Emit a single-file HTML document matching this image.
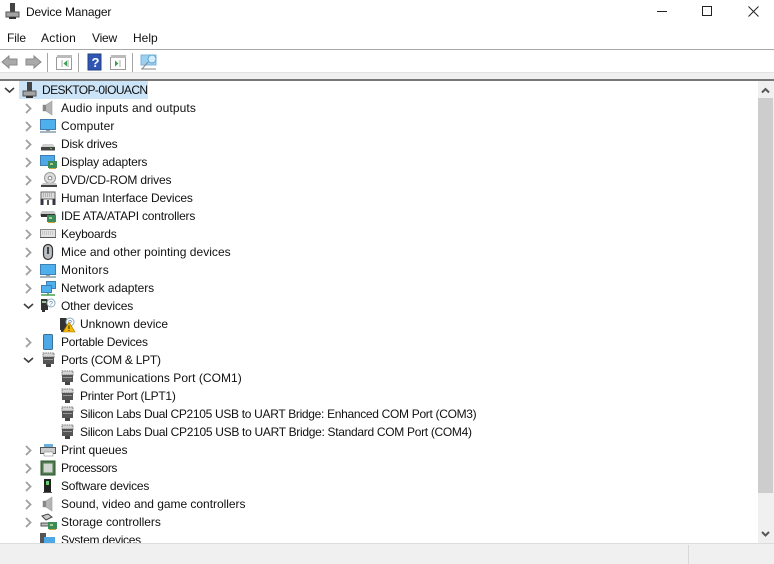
<!DOCTYPE html>
<html><head><meta charset="utf-8"><style>
html,body{margin:0;padding:0;width:774px;height:564px;overflow:hidden;background:#fff}
body{position:relative;font-family:"Liberation Sans",sans-serif;font-size:12px;color:#111}
.t{position:absolute;white-space:nowrap;line-height:16px;height:16px;filter:blur(.2px)}
.b{position:absolute}
svg{position:absolute;left:0;top:0;filter:blur(.25px)}
</style></head><body>
<div class="b" style="left:0;top:49px;width:774px;height:1px;background:#a8a8a8"></div>
<div class="b" style="left:0;top:72px;width:774px;height:1px;background:#e2e2e2"></div>
<div class="b" style="left:0;top:73px;width:774px;height:7px;background:#f0f0f0"></div>
<div class="b" style="left:0;top:79px;width:774px;height:2px;background:#777"></div>
<div class="b" style="left:19px;top:81px;width:129px;height:18px;background:#cce4f7"></div>
<div class="b" style="left:758px;top:81px;width:16px;height:462px;background:#f0f0f0"></div>
<div class="b" style="left:758px;top:98px;width:15px;height:395px;background:#cdcdcd"></div>
<div class="b" style="left:0;top:543px;width:774px;height:21px;background:#f0f0f0;border-top:1px solid #dcdcdc;box-sizing:border-box"></div>
<div class="b" style="left:688px;top:545px;width:1px;height:19px;background:#d8d8d8"></div>

<span class="t" style="left:26px;top:4px;letter-spacing:-.15px">Device Manager</span>
<span class="t" style="left:7px;top:30px;letter-spacing:-.1px">File</span>
<span class="t" style="left:41px;top:30px;letter-spacing:.3px">Action</span>
<span class="t" style="left:92px;top:30px;letter-spacing:-.2px">View</span>
<span class="t" style="left:133px;top:30px">Help</span>

<span class="t" style="left:42px;top:82px;letter-spacing:-.6px">DESKTOP-0IOUACN</span>
<span class="t" style="left:61px;top:100px;letter-spacing:.12px">Audio inputs and outputs</span>
<span class="t" style="left:61px;top:118px;letter-spacing:.1px">Computer</span>
<span class="t" style="left:61px;top:136px;letter-spacing:-.2px">Disk drives</span>
<span class="t" style="left:61px;top:154px;letter-spacing:-.2px">Display adapters</span>
<span class="t" style="left:61px;top:172px;letter-spacing:-.18px">DVD/CD-ROM drives</span>
<span class="t" style="left:61px;top:190px;letter-spacing:-.13px">Human Interface Devices</span>
<span class="t" style="left:61px;top:208px;letter-spacing:-.2px">IDE ATA/ATAPI controllers</span>
<span class="t" style="left:61px;top:226px;letter-spacing:-.2px">Keyboards</span>
<span class="t" style="left:61px;top:244px;letter-spacing:.03px">Mice and other pointing devices</span>
<span class="t" style="left:61px;top:262px;letter-spacing:.25px">Monitors</span>
<span class="t" style="left:61px;top:280px;letter-spacing:-.06px">Network adapters</span>
<span class="t" style="left:61px;top:298px;letter-spacing:-.15px">Other devices</span>
<span class="t" style="left:80px;top:316px">Unknown device</span>
<span class="t" style="left:61px;top:334px;letter-spacing:-.25px">Portable Devices</span>
<span class="t" style="left:61px;top:352px;letter-spacing:-.25px">Ports (COM &amp; LPT)</span>
<span class="t" style="left:80px;top:370px;letter-spacing:.04px">Communications Port (COM1)</span>
<span class="t" style="left:80px;top:388px;letter-spacing:-.27px">Printer Port (LPT1)</span>
<span class="t" style="left:80px;top:406px;letter-spacing:-.31px">Silicon Labs Dual CP2105 USB to UART Bridge: Enhanced COM Port (COM3)</span>
<span class="t" style="left:80px;top:424px;letter-spacing:-.3px">Silicon Labs Dual CP2105 USB to UART Bridge: Standard COM Port (COM4)</span>
<span class="t" style="left:61px;top:442px;letter-spacing:-.08px">Print queues</span>
<span class="t" style="left:61px;top:460px;letter-spacing:-.4px">Processors</span>
<span class="t" style="left:61px;top:478px;letter-spacing:-.2px">Software devices</span>
<span class="t" style="left:61px;top:496px;letter-spacing:-.03px">Sound, video and game controllers</span>
<span class="t" style="left:61px;top:514px;letter-spacing:-.05px">Storage controllers</span>
<div class="b" style="left:0;top:532px;width:758px;height:11px;overflow:hidden"><span class="t" style="left:61px;top:0;letter-spacing:-.3px">System devices</span></div>

<svg width="774" height="564" viewBox="0 0 774 564" fill="none">
<defs>
<path id="cr" d="M0 0l4.500 4.500-4.500 4.500" stroke="#a2a2a2" stroke-width="1.900"/>
<path id="cd" d="M0 0l4.500 4 4.500-4" stroke="#404040" stroke-width="1.600"/>
<g id="port">
<rect x="1" y="1" width="11" height="4" fill="#d5d5d5" stroke="#777" stroke-dasharray="1.500 .8"/>
<rect x="1" y="5" width="11" height="7" fill="#555"/>
<rect x="2" y="7" width="9" height="1" fill="#999"/>
<rect x="4" y="12" width="5" height="3" fill="#444"/>
</g>
<g id="pc">
<rect x="5" y="0" width="5" height="9" fill="#444"/>
<rect x="1" y="9" width="13" height="5" fill="#a4a4a4" stroke="#555"/>
<rect x="4" y="14" width="7" height="2" fill="#333"/>
</g>
<g id="mon">
<rect x=".5" y=".5" width="15" height="10" fill="#4fb0ee" stroke="#3d7fb5"/>
<rect x="6" y="11" width="4" height="1" fill="#999"/>
<rect x="0" y="12" width="16" height="2" fill="#a4b4c0"/>
</g>
<g id="spk">
<path d="M0 5h3L9 1v14L3 11H0z" fill="#b4b4b4" stroke="#9a9a9a" stroke-width=".6"/>
<rect x="0" y="5" width="3" height="6" fill="#868686"/>
</g>
<g id="board"><rect width="9" height="7" fill="#3a8a5a"/><rect x="1" y="7" width="7" height="1" fill="#c9a43a"/><rect x="2" y="2" width="3" height="2" fill="#a6d08a"/></g>
</defs>

<!-- title icon -->
<use href="#pc" x="5" y="3"/>
<!-- window controls -->
<path d="M657 11.500h10" stroke="#222" stroke-width="1"/>
<rect x="702.500" y="6.500" width="9" height="9" stroke="#222" stroke-width="1"/>
<path d="M748.500 6.500l10 10M758.500 6.500l-10 10" stroke="#222" stroke-width="1"/>

<!-- toolbar -->
<path d="M2 62l7-6v3h8v6H9v3z" fill="#a9a9a9" stroke="#8a8a8a"/>
<path d="M41 62l-7-6v3h-8v6h8v3z" fill="#a9a9a9" stroke="#8a8a8a"/>
<path d="M47.500 53v19M78.500 53v19M132.500 53v19" stroke="#a5a5a5"/>
<rect x="56.500" y="57.500" width="15" height="12" fill="#fff" stroke="#999"/>
<rect x="57" y="55" width="15" height="3" fill="#bbb"/>
<path d="M62 60v7M68 60v7" stroke="#aaa"/><path d="M67 60.500l-3.500 3 3.500 3z" fill="#3aa050"/>
<rect x="88" y="54" width="13" height="16" fill="#2f55b5" stroke="#24407f"/>
<text x="91.500" y="67" font-family="Liberation Sans" font-size="13" font-weight="bold" fill="#fff">?</text>
<rect x="110.500" y="57.500" width="15" height="12" fill="#fff" stroke="#999"/>
<rect x="111" y="55" width="15" height="3" fill="#bbb"/>
<path d="M120 60v7" stroke="#aaa"/><path d="M115 60.500l3.500 3-3.500 3z" fill="#3aa050"/>
<rect x="141" y="55" width="15" height="10" fill="#9bd0f0" stroke="#7db5d8"/>
<circle cx="152" cy="59" r="4" fill="#d3ecfa" stroke="#5aa6d0"/>
<path d="M148 62l-6 7M141 69h15" stroke="#888"/>

<!-- root -->
<use href="#cd" x="5" y="88"/>
<use href="#pc" x="22" y="82"/>

<!-- chevrons right -->
<use href="#cr" x="26" y="104"/><use href="#cr" x="26" y="122"/><use href="#cr" x="26" y="140"/>
<use href="#cr" x="26" y="158"/><use href="#cr" x="26" y="176"/><use href="#cr" x="26" y="194"/>
<use href="#cr" x="26" y="212"/><use href="#cr" x="26" y="230"/><use href="#cr" x="26" y="248"/>
<use href="#cr" x="26" y="266"/><use href="#cr" x="26" y="284"/><use href="#cr" x="26" y="338"/>
<use href="#cr" x="26" y="446"/><use href="#cr" x="26" y="464"/><use href="#cr" x="26" y="482"/>
<use href="#cr" x="26" y="500"/><use href="#cr" x="26" y="518"/>
<use href="#cd" x="24" y="304"/><use href="#cd" x="24" y="358"/>

<!-- icons -->
<use href="#spk" x="43" y="100"/>
<use href="#mon" x="40" y="119"/>
<!-- disk -->
<path d="M43 144h10l2 3v3H41v-3z" fill="#d0d0d0"/><rect x="41" y="147" width="14" height="3.500" fill="#444"/><rect x="50" y="148" width="2" height="1" fill="#5c5"/>
<!-- display -->
<rect x="40.500" y="155.500" width="14" height="10" fill="#4fa8e6" stroke="#3d7fb5"/>
<use href="#board" x="48" y="161"/>
<!-- dvd -->
<circle cx="50" cy="178" r="5.500" fill="#ddd" stroke="#999"/><circle cx="50" cy="178" r="1.800" fill="#fff" stroke="#888"/>
<path d="M43 183h13l1 2v2H41v-2z" fill="#c6c6c6"/><rect x="41" y="185" width="16" height="2" fill="#444"/>
<!-- HID -->
<rect x="41" y="192" width="14" height="7" fill="#ddd" stroke="#666"/><path d="M43 194h10M43 196h10" stroke="#888" stroke-dasharray="1 1"/>
<path d="M42 199v6M54 199v6" stroke="#334" stroke-width="3"/><path d="M48 200v5" stroke="#555" stroke-width="2"/>
<!-- IDE -->
<path d="M42 211h12l2 3v2H40v-2z" fill="#c6c6c6"/><rect x="41" y="214" width="14" height="3" fill="#333"/>
<use href="#board" x="47" y="215"/>
<!-- keyboard -->
<rect x="40.500" y="229.500" width="15" height="8" fill="#e2e2e2" stroke="#888"/><path d="M42 232h12M42 234h12" stroke="#aaa" stroke-dasharray="1 1"/><rect x="40" y="237" width="16" height="1" fill="#555"/>
<!-- mouse -->
<rect x="43.500" y="244.500" width="9" height="15" rx="4.500" fill="#b8bec4" stroke="#333" stroke-width="1.200"/><rect x="47" y="247" width="2" height="7" fill="#444"/>
<!-- monitors -->
<use href="#mon" x="40" y="264"/>
<!-- network -->
<rect x="46.500" y="281.500" width="9" height="7" fill="#4fb0ee" stroke="#3d7fb5"/>
<rect x="41.500" y="285.500" width="10" height="7" fill="#4fb0ee" stroke="#3d7fb5"/>
<path d="M41 295h14M48 293v2" stroke="#4aa050" stroke-width="1.500"/>
<!-- other -->
<path d="M41 299h6l1 1v10h-3v2h-3v-2h-1z" fill="#333"/><rect x="42" y="301" width="4" height="2" fill="#9c9"/>
<circle cx="51" cy="303" r="4" fill="#fff" stroke="#8ab"/><text x="49" y="306" font-family="Liberation Sans" font-size="7" fill="#57a">?</text>
<!-- unknown -->
<path d="M60 318h6l1 1v11h-3v2h-3v-2h-1z" fill="#333"/>
<circle cx="70" cy="322" r="4" fill="#fff" stroke="#8ab"/><text x="68" y="325" font-family="Liberation Sans" font-size="7" fill="#57a">?</text>
<path d="M69 322l6 10H63z" fill="#f5b800" stroke="#a87800" stroke-width=".6"/><path d="M69 325.500v3.500M69 330v1" stroke="#222"/>
<!-- portable -->
<rect x="43.500" y="334.500" width="9" height="15" rx="1" fill="#4fa8e6" stroke="#3c6f9a"/>
<!-- ports -->
<use href="#port" x="42" y="352"/>
<use href="#port" x="61" y="370"/><use href="#port" x="61" y="388"/><use href="#port" x="61" y="406"/><use href="#port" x="61" y="424"/>
<!-- print -->
<rect x="44" y="444" width="9" height="3" fill="#6ab0dd"/>
<rect x="40.500" y="447.500" width="15" height="6" fill="#ccc" stroke="#555"/><rect x="44" y="452" width="9" height="4" fill="#fff" stroke="#777" stroke-width=".5"/>
<!-- cpu -->
<rect x="41" y="461" width="14" height="14" fill="#4d7b4d" stroke="#2f552f"/><rect x="43.500" y="463.500" width="9" height="9" fill="#d3d6d3"/>
<!-- software -->
<rect x="44" y="479" width="7" height="14" fill="#222"/><rect x="46" y="481" width="3" height="4" fill="#6c6"/><rect x="43" y="492" width="9" height="1" fill="#555"/>
<!-- sound -->
<use href="#spk" x="43" y="496"/>
<!-- storage -->
<path d="M42 516l6-2 4 3-6 3z" fill="#ccc" stroke="#444"/><path d="M41 523h10v3H41z" fill="#bbb" stroke="#555"/>
<use href="#board" x="48" y="522"/>
<!-- system -->
<rect x="40" y="533" width="6" height="10" fill="#555"/><rect x="44" y="537" width="11" height="6" fill="#4fa8e6"/>
<!-- scrollbar arrows -->
<path d="M762 92.500l3.500-3.500 3.500 3.500" stroke="#555" stroke-width="2"/>
<path d="M762 532l3.500 3.500 3.500-3.500" stroke="#555" stroke-width="2"/>
</svg>
</body></html>
